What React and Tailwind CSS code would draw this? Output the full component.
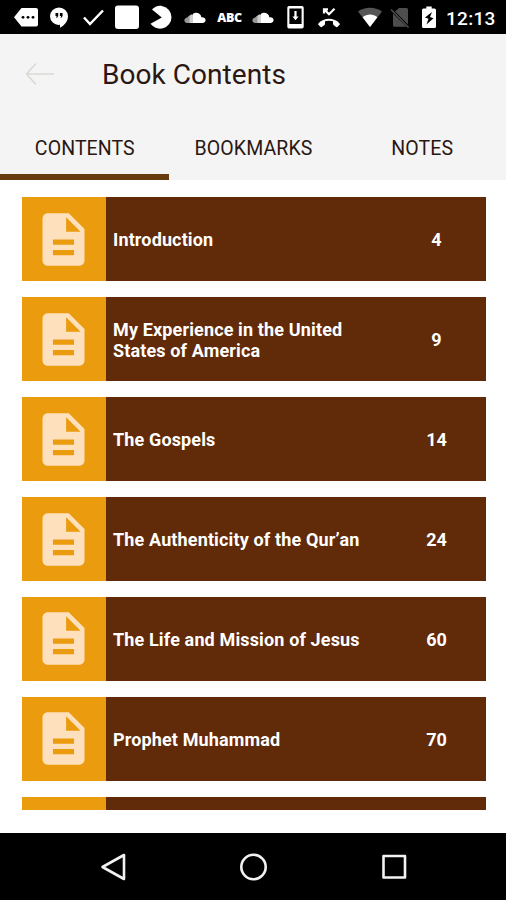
import React from 'react';

const chapters = [
    { title: 'Introduction', page: 4 },
    { title: 'My Experience in the United States of America', page: 9 },
    { title: 'The Gospels', page: 14 },
    { title: 'The Authenticity of the Qur’an', page: 24 },
    { title: 'The Life and Mission of Jesus', page: 60 },
    { title: 'Prophet Muhammad', page: 70 },
    { title: '', page: '' },
];

const tabs = ['CONTENTS', 'BOOKMARKS', 'NOTES'];

function Glyph({ w, className, children }) {
    return (
        <svg width={w} height="34" viewBox={`0 0 ${w} 34`} fill="#fff" className={`shrink-0 ${className}`}>
            {children}
        </svg>
    );
}

function Cloud({ className }) {
    return (
        <Glyph w={22} className={className}>
            <path d="M5 16.200C6 14.800 7.500 14.300 9.500 14.800V23H5z" fill="#cfcfcf" />
            <path d="M5.500 15.800V23H3.300C1.400 23 .4 21.800 .4 20.300S1.800 17.400 3.300 17.400C3.800 16.600 4.600 16 5.500 15.800z" fill="#999" />
            <path d="M9 14C10 13 11 12.800 12 12.800C14.800 12.800 17 14.600 17.400 17.200C19.700 16.800 21.600 18.100 21.600 20.100C21.600 21.800 20.300 23 18.600 23H9z" />
        </Glyph>
    );
}

function StatusBar() {
    return (
        <div className="flex h-[34px] shrink-0 items-center bg-black text-white">
            {/* message tag */}
            <Glyph w={24} className="ml-[14px]">
                <path d="M7.500 8H22a2 2 0 0 1 2 2v14.500a2 2 0 0 1-2 2H7.500L0 17.200z" />
                <g fill="#000">
                    <circle cx="9" cy="17.300" r="1.400" />
                    <circle cx="14" cy="17.300" r="1.400" />
                    <circle cx="19" cy="17.300" r="1.400" />
                </g>
            </Glyph>
            {/* hangouts */}
            <Glyph w={18} className="ml-[12px]">
                <path d="M9 7.500a9 8.800 0 0 1 9 8.700c0 4.900-3.500 9.100-8 11.600v-3A8.700 8.700 0 0 1 0 16.200 9 8.800 0 0 1 9 7.500z" />
                <path d="M5.500 13h2.700v3L7 17.800H6.100l.6-1.800H5.500zM9.900 13h2.700v3l-1.200 1.800h-.9l.6-1.800H9.900z" fill="#000" />
            </Glyph>
            <Glyph w={22} className="ml-[15px]">
                <path d="M1 17.500l6 6.500L20 10.500" fill="none" stroke="#fff" strokeWidth="2.500" />
            </Glyph>
            <Glyph w={24} className="ml-[10px]">
                <rect x="0" y="5.500" width="24" height="23.500" rx="3" />
            </Glyph>
            {/* open-mouthed disc */}
            <Glyph w={22} className="ml-[11px]">
                <path d="M2 9.500C5 6.300 9 5 12.500 6.200a11.300 11.300 0 0 1 .500 22c-4 1.200-8.500.2-12.500-4.400l11.300-6.300z" />
            </Glyph>
            <Cloud className="ml-[12px]" />
            <span className="ml-[11px] w-[25px] pt-[2px] text-center font-['Open_Sans',sans-serif] text-[12.500px] leading-none font-extrabold tracking-[-0.300px]">ABC</span>
            <Cloud className="ml-[10px]" />
            {/* phone with download arrow */}
            <Glyph w={17} className="ml-[13px]">
                <path fillRule="evenodd" d="M2 6h13a1.700 1.700 0 0 1 1.700 1.700v19A1.700 1.700 0 0 1 15 28.400H2A1.700 1.700 0 0 1 .3 26.700v-19A1.700 1.700 0 0 1 2 6zm.4 2.500v15.500h12.200V8.500z" />
                <path d="M7.400 11h2.200v5.500h2L8.500 20.300l-3.100-3.800h2z" />
            </Glyph>
            {/* missed call */}
            <Glyph w={22} className="ml-[14px]">
                <path d="M6 13.500V9.300h4M6 9.300l5 5L16.500 8.800" fill="none" stroke="#fff" strokeWidth="2.200" />
                <path d="M.4 23.400C6 17.300 16 17.300 21.600 23.400c.4.500.4 1 0 1.400l-2 2c-.5.500-1 .4-1.400.1l-2.700-2c-.4-.4-.5-.8-.5-1.200v-2.400c-2.600-.8-5.400-.8-8 0v2.400c0 .5-.1.900-.5 1.200l-2.700 2c-.5.400-1 .3-1.400-.1l-2-2c-.4-.4-.4-.9 0-1.400z" />
            </Glyph>
            {/* wifi */}
            <Glyph w={24} className="ml-[18px]">
                <path d="M0 11.500C7 6.500 17 6.500 24 11.500L12 27z" fill="#555" />
                <path d="M4.600 17.200c4.300-3.700 10.500-3.700 14.800 0L12 27z" />
            </Glyph>
            {/* no sim */}
            <Glyph w={20} className="ml-[8px]">
                <path d="M9 8h7.500a1.500 1.500 0 0 1 1.500 1.500v15L5 11.500zM3 13.500l13.500 13.300H4.500A1.500 1.500 0 0 1 3 25.300z" fill="#4d4d4d" />
                <path d="M1 9.500l17.500 18" stroke="#4d4d4d" strokeWidth="1.600" />
            </Glyph>
            {/* charging battery */}
            <Glyph w={14} className="ml-[12px]">
                <path d="M4.300 6.500h5.400v2h2.800a1.500 1.500 0 0 1 1.500 1.500v16.500a1.500 1.500 0 0 1-1.500 1.500h-11A1.500 1.500 0 0 1 0 26.500V10a1.500 1.500 0 0 1 1.500-1.500h2.800z" />
                <path d="M10 12L3 17.500l3.500 1.200L4.500 24.500l7-6.300L8 17z" fill="#000" />
            </Glyph>
            <span className="ml-[10px] pt-[2px] text-[19px] leading-none font-medium tracking-[0.300px]">12:13</span>
        </div>
    );
}

function ChapterRow({ title, page }) {
    return (
        <div className="flex h-[84px] shrink-0 bg-[#612a08] font-bold text-white">
            <div className="flex w-[84px] shrink-0 items-center justify-center bg-[#eb9b0e] pr-px">
                <svg width="63" height="63" viewBox="0 0 24 24" fill="#ffe0bd">
                    <path d="M14 2H6c-1.100 0-1.990.9-1.990 2L4 20c0 1.100.890 2 1.990 2H18c1.100 0 2-.9 2-2V8l-6-6zm2 16H8v-2h8v2zm0-4H8v-2h8v2zm-3-5V3.500L18.500 9H13z" />
                </svg>
            </div>
            <div className="flex flex-1 items-center pt-px pl-[7px] text-[18px] leading-[21px] tracking-[0.140px]">
                <p className="w-[260px]">{title}</p>
            </div>
            <div className="flex w-[98px] items-center justify-center pt-px text-[18px]">{page}</div>
        </div>
    );
}

export default function App() {
    return (
        <div className="flex h-[900px] w-[506px] flex-col overflow-hidden bg-white font-[Roboto,sans-serif]">
            <StatusBar />

            <header className="h-[146px] shrink-0 bg-[#f4f4f4] text-[#2b1712]">
                <div className="flex h-[80px] items-center pl-[25px]">
                    <svg width="30" height="24" viewBox="0 0 30 24" fill="none" stroke="#dad9d4" strokeWidth="1.600">
                        <path d="M29 12H1.500M11 1.500L1.500 12 11 22.500" />
                    </svg>
                    <h1 className="ml-[47px] pt-[2px] text-[28px] tracking-[0.050px]">Book Contents</h1>
                </div>
                <div className="flex h-[66px]">
                    {tabs.map((tab, i) => (
                        <button
                            key={tab}
                            className={`flex-1 border-b-[6px] pt-[10px] pl-px text-[19.500px] tracking-[0.100px] ${i === 0 ? 'border-[#693c0f]' : 'border-transparent'}`}
                        >
                            {tab}
                        </button>
                    ))}
                </div>
            </header>

            <main className="mt-[17.450px] flex h-[612.550px] shrink-0 flex-col gap-[15.860px] overflow-hidden pr-[20.500px] pl-[22px]">
                {chapters.map((chapter, i) => (
                    <ChapterRow key={i} {...chapter} />
                ))}
            </main>

            <nav className="mt-auto flex h-[67px] shrink-0 items-center justify-center gap-[112px] bg-black pl-[2px]">
                <svg width="28" height="28" viewBox="0 0 28 28" fill="none" stroke="#f2f2f2" strokeWidth="2.600" strokeLinejoin="round">
                    <path d="M24 2v24L2.500 14z" />
                </svg>
                <svg width="28" height="28" viewBox="0 0 28 28" fill="none" stroke="#f2f2f2" strokeWidth="2.600">
                    <circle cx="13.500" cy="14" r="12.200" />
                </svg>
                <svg width="28" height="28" viewBox="0 0 28 28" fill="none" stroke="#f2f2f2" strokeWidth="2.600" strokeLinejoin="round">
                    <rect x="3.500" y="3" width="21.500" height="21.500" />
                </svg>
            </nav>
        </div>
    );
}
